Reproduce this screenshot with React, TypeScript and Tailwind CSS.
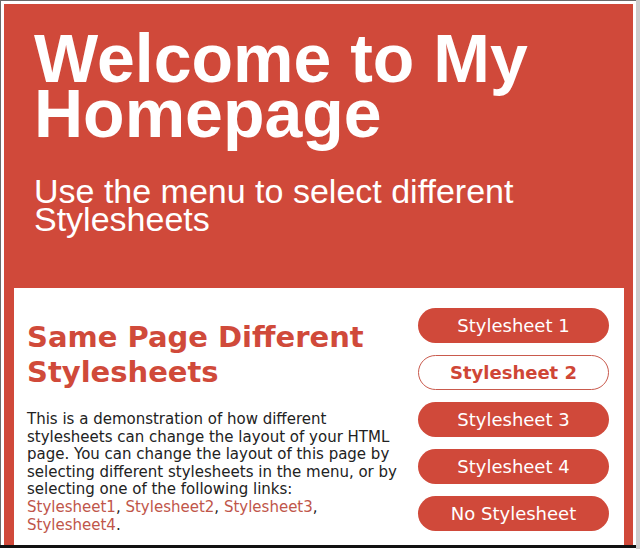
const buttons = ['Stylesheet 1', 'Stylesheet 2', 'Stylesheet 3', 'Stylesheet 4', 'No Stylesheet'];

// ─── Menu button ────────────────────────────────────────────────────────────

function MenuButton({ label, active }: { label: string; active: boolean }) {
  if (active) {
    return (
      <button className="h-[35px] w-full rounded-full border border-[#c95a4d] bg-white text-[18px] font-bold text-[#cf4636]">
        {label}
      </button>
    );
  }
  return (
    <button className="h-[35px] w-full rounded-full bg-[#d0493a] text-[18px] text-white">
      {label}
    </button>
  );
}

// ─── Page ───────────────────────────────────────────────────────────────────

export default function App() {
  return (
    <div className="flex h-[549px] w-[640px] overflow-hidden bg-white">
      <div className="flex h-[549px] flex-1 flex-col">
        <div className="h-[545px] overflow-hidden border-l border-t border-[#6b6b6b] pl-[3px] pt-[3px] pr-[3px]">
          {/* Red frame */}
          <div className="min-h-[560px] bg-[#d0493a] pl-[10px] pr-[9px]">
            {/* Header */}
            <div className="px-[20px] pt-[27px] pb-[55px] font-['Liberation_Sans',Arial,sans-serif] text-white">
              <h1 className="text-[68px] font-bold leading-[55px]">Welcome to My Homepage</h1>
              <p className="mt-[36px] text-[34px] leading-[28px]">
                Use the menu to select different Stylesheets
              </p>
            </div>

            {/* Content panel */}
            <div className="flex min-h-[300px] bg-white pt-[20px] pl-[13px] pr-[15px] font-['DejaVu_Sans',Verdana,sans-serif]">
              <div className="w-[378px]">
                <h2 className="mt-[12px] text-[29px] font-bold leading-[35px] text-[#d04a3a]">
                  Same Page Different Stylesheets
                </h2>
                <p className="mt-[21px] text-[15px] leading-[17.6px] text-[#222]">
                  This is a demonstration of how different stylesheets can change the layout of your
                  HTML page. You can change the layout of this page by selecting different
                  stylesheets in the menu, or by selecting one of the following links:
                  <br />
                  <a className="text-[#c0564a]">Stylesheet1</a>,{' '}
                  <a className="text-[#c0564a]">Stylesheet2</a>,{' '}
                  <a className="text-[#c0564a]">Stylesheet3</a>,{' '}
                  <a className="text-[#c0564a]">Stylesheet4</a>.
                </p>
              </div>
              <div className="ml-auto flex w-[191px] flex-col gap-[12px]">
                {buttons.map((b) => (
                  <MenuButton key={b} label={b} active={b === 'Stylesheet 2'} />
                ))}
              </div>
            </div>
          </div>
        </div>
        <div className="h-[3px] bg-[#111]" />
      </div>
      {/* Right edge stripe */}
      <div className="w-[4px] bg-[#cdcdcd]" />
    </div>
  );
}
